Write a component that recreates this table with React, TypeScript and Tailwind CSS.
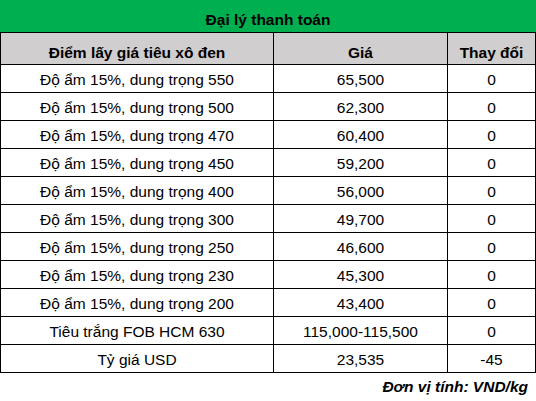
import React from "react";

const rows: [string, string, string][] = [
  ["Độ ẩm 15%, dung trọng 550", "65,500", "0"],
  ["Độ ẩm 15%, dung trọng 500", "62,300", "0"],
  ["Độ ẩm 15%, dung trọng 470", "60,400", "0"],
  ["Độ ẩm 15%, dung trọng 450", "59,200", "0"],
  ["Độ ẩm 15%, dung trọng 400", "56,000", "0"],
  ["Độ ẩm 15%, dung trọng 300", "49,700", "0"],
  ["Độ ẩm 15%, dung trọng 250", "46,600", "0"],
  ["Độ ẩm 15%, dung trọng 230", "45,300", "0"],
  ["Độ ẩm 15%, dung trọng 200", "43,400", "0"],
  ["Tiêu trắng FOB HCM 630", "115,000-115,500", "0"],
  ["Tỷ giá USD", "23,535", "-45"],
];

export default function App() {
  return (
    <div
      className="w-[536px] h-[401px] bg-white text-black text-[15.5px] leading-none overflow-hidden"
      style={{ fontFamily: '"Liberation Sans", Arial, sans-serif' }}
    >
      <div className="h-[33px] bg-[#00b050] border-b border-black flex items-end justify-center pb-[5px] font-bold">
        Đại lý thanh toán
      </div>
      <div className="border-x border-black">
        <div className="grid grid-cols-[272px_174px_88px] h-[32px] bg-[#d0cece] border-b border-black font-bold">
          <div className="flex items-end justify-center pb-[4px]">Điểm lấy giá tiêu xô đen</div>
          <div className="flex items-end justify-center pb-[4px] border-l border-black">Giá</div>
          <div className="flex items-end justify-center pb-[4px] border-l border-black">Thay đổi</div>
        </div>
        {rows.map((r, i) => (
          <div key={i} className="grid grid-cols-[272px_174px_88px] h-[28px] border-b border-black">
            <div className="flex items-end justify-center pb-[5px]">{r[0]}</div>
            <div className="flex items-end justify-center pb-[5px] border-l border-black">{r[1]}</div>
            <div className="flex items-end justify-center pb-[5px] border-l border-black">{r[2]}</div>
          </div>
        ))}
      </div>
      <div className="flex justify-end pr-[8px] pt-[6px] font-bold italic">Đơn vị tính: VND/kg</div>
    </div>
  );
}
